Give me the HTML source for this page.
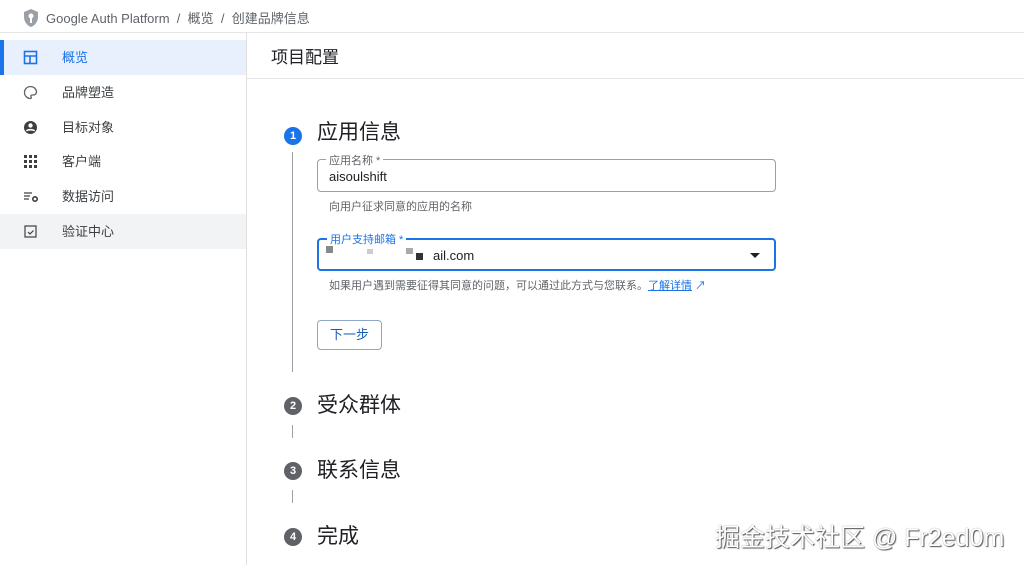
<!DOCTYPE html>
<html><head><meta charset="utf-8"><style>
*{margin:0;padding:0;box-sizing:border-box}
body{width:1024px;height:565px;overflow:hidden;background:#fff;font-family:"Liberation Sans","Noto Sans CJK SC",sans-serif;color:#202124;position:relative}
.top{position:absolute;left:0;top:0;width:1024px;height:33px;border-bottom:1px solid #e6e6e6;background:#fff}
.top .t{position:absolute;left:46px;top:8px;font-size:13px;color:#5f6368;white-space:nowrap}
.side{position:absolute;left:0;top:33px;width:247px;height:532px;border-right:1px solid #e0e0e0}
.item{position:absolute;left:0;width:246px;height:35px;font-size:13px;color:#3c4043}
.item span{position:absolute;left:62px;top:7px}
.item svg{position:absolute;left:23px;top:10px}
.sel{background:#e8f0fe;color:#1a73e8}
.sel::before{content:"";position:absolute;left:0;top:0;width:4px;height:35px;background:#1a73e8}
.sel span{color:#1a73e8}
.gray{background:#f1f3f4}
.hdr{position:absolute;left:247px;top:33px;width:777px;height:46px;border-bottom:1px solid #e6e6e6}
.hdr span{position:absolute;left:24px;top:10px;font-size:17px}
.c{position:absolute;left:284px;width:18px;height:18px;border-radius:50%;color:#fff;font-size:11px;font-weight:bold;text-align:center;line-height:18px;background:#5f6368}
.st{position:absolute;left:317px;font-size:21px;color:#202124}
.vl{position:absolute;left:292px;width:1px;background:#9aa0a6}
.inp{position:absolute;left:317px;width:459px;height:33px;border:1px solid #9aa0a6;border-radius:4px}
.lab{position:absolute;left:8px;top:-8px;background:#fff;padding:0 3px;font-size:11px;color:#5f6368}
.help{position:absolute;left:329px;font-size:11px;color:#5f6368}
.wm{position:absolute;left:715px;top:518px;font-size:25px;color:#fff;text-shadow:1px 1px 1px #555,0 0 1px #777;white-space:nowrap}
</style></head><body>
<div class="top">
<svg style="position:absolute;left:22px;top:8px" width="18" height="20" viewBox="0 0 18 20"><path d="M9 1L2 4v5c0 4.5 3 8.5 7 10 4-1.5 7-5.5 7-10V4z" fill="#9aa0a6"/><circle cx="9" cy="8" r="2.5" fill="#fff"/><rect x="8" y="9" width="2" height="6" fill="#fff"/></svg>
<div class="t">Google Auth Platform &nbsp;/&nbsp; 概览 &nbsp;/&nbsp; 创建品牌信息</div>
</div>
<div class="side">
<div class="item sel" style="top:7px"><svg width="15" height="15" viewBox="0 0 15 15"><rect x="1.5" y="1.5" width="12" height="12" fill="none" stroke="#1a73e8" stroke-width="1.6"/><path d="M1.5 6h12M7 6v7.5" stroke="#1a73e8" stroke-width="1.6"/></svg><span>概览</span></div>
<div class="item" style="top:42px"><svg width="15" height="15" viewBox="0 0 15 15"><path d="M7.5 1.5a6 6 0 1 0 0 12c1 0 1-1 .5-1.8-.5-.8 0-1.7 1-1.7h1.5a3 3 0 0 0 3-3c0-3-2.7-5.5-6-5.5z" fill="none" stroke="#5f6368" stroke-width="1.3"/></svg><span>品牌塑造</span></div>
<div class="item" style="top:77px"><svg width="15" height="15" viewBox="0 0 15 15"><circle cx="7.5" cy="7.5" r="6.5" fill="#3c4043"/><circle cx="7.5" cy="5.5" r="2.2" fill="#fff"/><path d="M3.5 11c1-1.8 7-1.8 8 0" stroke="#fff" stroke-width="1.6" fill="none"/></svg><span>目标对象</span></div>
<div class="item" style="top:111px"><svg width="15" height="15" viewBox="0 0 15 15" fill="#3c4043"><rect x="1" y="1" width="3" height="3"/><rect x="6" y="1" width="3" height="3"/><rect x="11" y="1" width="3" height="3"/><rect x="1" y="6" width="3" height="3"/><rect x="6" y="6" width="3" height="3"/><rect x="11" y="6" width="3" height="3"/><rect x="1" y="11" width="3" height="3"/><rect x="6" y="11" width="3" height="3"/><rect x="11" y="11" width="3" height="3"/></svg><span>客户端</span></div>
<div class="item" style="top:146px"><svg width="16" height="15" viewBox="0 0 16 15"><path d="M1 4h8M1 7h6M1 10h5" stroke="#3c4043" stroke-width="1.3"/><circle cx="12" cy="10" r="2.2" fill="none" stroke="#3c4043" stroke-width="1.6"/></svg><span>数据访问</span></div>
<div class="item gray" style="top:181px"><svg width="15" height="15" viewBox="0 0 15 15"><rect x="2" y="2" width="11" height="11" fill="none" stroke="#3c4043" stroke-width="1.2"/><path d="M5 8l2 2 3.5-3.5" stroke="#3c4043" stroke-width="1.2" fill="none"/></svg><span>验证中心</span></div>
</div>
<div class="hdr"><span>项目配置</span></div>

<div class="c" style="top:127px;background:#1a73e8">1</div>
<div class="st" style="top:116px">应用信息</div>
<div class="vl" style="top:152px;height:220px"></div>
<div class="inp" style="top:159px"><div class="lab">应用名称 *</div><div style="position:absolute;left:11px;top:9px;font-size:13px">aisoulshift</div></div>
<div class="help" style="top:198px">向用户征求同意的应用的名称</div>
<div class="inp" style="top:238px;border:2px solid #1a73e8"><div class="lab" style="top:-9px;color:#1a73e8">用户支持邮箱 *</div>
<div style="position:absolute;left:7px;top:6px;width:7px;height:7px;background:#888"></div>
<div style="position:absolute;left:48px;top:9px;width:6px;height:5px;background:#ccc"></div>
<div style="position:absolute;left:87px;top:8px;width:7px;height:6px;background:#aaa"></div>
<div style="position:absolute;left:97px;top:13px;width:7px;height:7px;background:#333"></div>
<div style="position:absolute;left:114px;top:8px;font-size:13px">ail.com</div>
<div style="position:absolute;right:14px;top:13px;border-left:5px solid transparent;border-right:5px solid transparent;border-top:5px solid #202124"></div></div>
<div class="help" style="top:277px">如果用户遇到需要征得其同意的问题，可以通过此方式与您联系。<span style="color:#1a73e8;text-decoration:underline">了解详情</span><span style="color:#1a73e8"> ↗</span></div>
<div style="position:absolute;left:317px;top:320px;width:65px;height:30px;border:1px solid #8fa6c8;border-radius:4px;color:#1a5fb4;font-size:13px;text-align:center;line-height:28px">下一步</div>

<div class="c" style="top:397px">2</div>
<div class="st" style="top:389px">受众群体</div>
<div class="vl" style="top:425px;height:13px"></div>
<div class="c" style="top:462px">3</div>
<div class="st" style="top:454px">联系信息</div>
<div class="vl" style="top:490px;height:13px"></div>
<div class="c" style="top:528px">4</div>
<div class="st" style="top:520px">完成</div>

<div class="wm">掘金技术社区 @ Fr2ed0m</div>
</body></html>
